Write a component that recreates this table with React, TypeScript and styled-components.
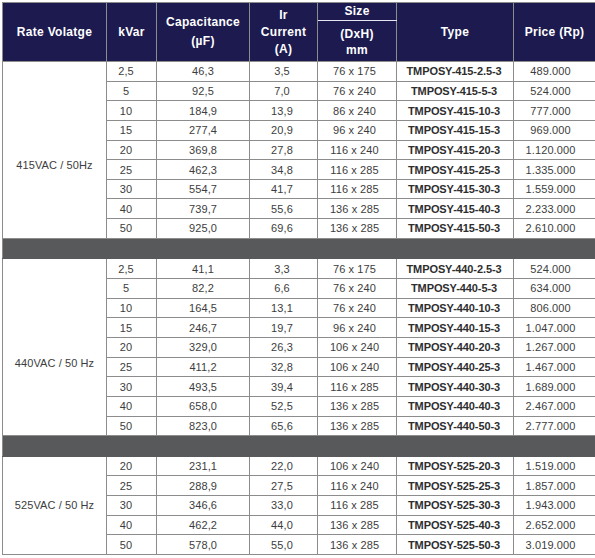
import React from "react";
import styled, { createGlobalStyle } from "styled-components";

const Global = createGlobalStyle`
  html, body { margin: 0; padding: 0; background: #ffffff; }
  body { font-family: "Liberation Sans", Arial, sans-serif; }
`;

const Page = styled.div`
  padding: 2px 0 0 2px;
`;

const Table = styled.table`
  border-collapse: collapse;
  table-layout: fixed;
  width: 593px;
  border: 1px solid #8c8c8c;
`;

const HeadCell = styled.th<{ $lh?: number }>`
  background: #1d1a4f;
  color: #ffffff;
  font-weight: bold;
  font-size: 12px;
  letter-spacing: 0.3px;
  line-height: ${(p) => p.$lh ?? 17}px;
  text-align: center;
  vertical-align: middle;
  border: 1px solid #8c8c8c;
  padding: 0 2px;
`;

const SizeTop = styled(HeadCell)`
  height: 17px;
  border-bottom: 1px solid #e6e6f0;
`;

const SizeBottom = styled(HeadCell)`
  height: 38px;
  border-top: 1px solid #e6e6f0;
  line-height: 16px;
  padding-top: 2px;
`;

const Row = styled.tr`
  height: 19.65px;
`;

const Cell = styled.td<{ $bold?: boolean; $pr?: number }>`
  font-size: 11px;
  color: ${(p) => (p.$bold ? "#2e2e2e" : "#3d3d3d")};
  font-weight: ${(p) => (p.$bold ? "bold" : "normal")};
  letter-spacing: ${(p) => (p.$bold ? "-0.1px" : "0.1px")};
  text-align: center;
  vertical-align: middle;
  border: 1px solid #8c8c8c;
  padding: 0 ${(p) => p.$pr ?? 0}px 0 0;
  white-space: nowrap;
`;

const RateCell = styled.td<{ $shift: number }>`
  font-size: 11px;
  color: #3d3d3d;
  letter-spacing: 0.1px;
  text-align: center;
  vertical-align: middle;
  border: 1px solid #8c8c8c;
  padding: ${(p) => p.$shift}px 0 0 0;
`;

const SepCell = styled.td`
  background: #58595b;
  border: 1px solid #58595b;
  border-left: 1px solid #8c8c8c;
  border-right: 1px solid #8c8c8c;
  height: 19.65px;
  padding: 0;
`;

type R = [string, string, string, string, string, string];

const sections: { rate: string; shift: number; rows: R[] }[] = [
  {
    rate: "415VAC / 50Hz",
    shift: 30,
    rows: [
      ["2,5", "46,3", "3,5", "76 x 175", "TMPOSY-415-2.5-3", "489.000"],
      ["5", "92,5", "7,0", "76 x 240", "TMPOSY-415-5-3", "524.000"],
      ["10", "184,9", "13,9", "86 x 240", "TMPOSY-415-10-3", "777.000"],
      ["15", "277,4", "20,9", "96 x 240", "TMPOSY-415-15-3", "969.000"],
      ["20", "369,8", "27,8", "116 x 240", "TMPOSY-415-20-3", "1.120.000"],
      ["25", "462,3", "34,8", "116 x 285", "TMPOSY-415-25-3", "1.335.000"],
      ["30", "554,7", "41,7", "116 x 285", "TMPOSY-415-30-3", "1.559.000"],
      ["40", "739,7", "55,6", "136 x 285", "TMPOSY-415-40-3", "2.233.000"],
      ["50", "925,0", "69,6", "136 x 285", "TMPOSY-415-50-3", "2.610.000"],
    ],
  },
  {
    rate: "440VAC / 50 Hz",
    shift: 32,
    rows: [
      ["2,5", "41,1", "3,3", "76 x 175", "TMPOSY-440-2.5-3", "524.000"],
      ["5", "82,2", "6,6", "76 x 240", "TMPOSY-440-5-3", "634.000"],
      ["10", "164,5", "13,1", "76 x 240", "TMPOSY-440-10-3", "806.000"],
      ["15", "246,7", "19,7", "96 x 240", "TMPOSY-440-15-3", "1.047.000"],
      ["20", "329,0", "26,3", "106 x 240", "TMPOSY-440-20-3", "1.267.000"],
      ["25", "411,2", "32,8", "106 x 240", "TMPOSY-440-25-3", "1.467.000"],
      ["30", "493,5", "39,4", "116 x 285", "TMPOSY-440-30-3", "1.689.000"],
      ["40", "658,0", "52,5", "136 x 285", "TMPOSY-440-40-3", "2.467.000"],
      ["50", "823,0", "65,6", "136 x 285", "TMPOSY-440-50-3", "2.777.000"],
    ],
  },
  {
    rate: "525VAC / 50 Hz",
    shift: 0,
    rows: [
      ["20", "231,1", "22,0", "106 x 240", "TMPOSY-525-20-3", "1.519.000"],
      ["25", "288,9", "27,5", "116 x 240", "TMPOSY-525-25-3", "1.857.000"],
      ["30", "346,6", "33,0", "116 x 285", "TMPOSY-525-30-3", "1.943.000"],
      ["40", "462,2", "44,0", "136 x 285", "TMPOSY-525-40-3", "2.652.000"],
      ["50", "578,0", "55,0", "136 x 285", "TMPOSY-525-50-3", "3.019.000"],
    ],
  },
];

const widths = [104, 50, 93, 68, 79, 117, 82];

export default function App() {
  return (
    <Page>
      <Global />
      <Table>
        <colgroup>
          {widths.map((w, i) => (
            <col key={i} style={{ width: w }} />
          ))}
        </colgroup>
        <thead>
          <tr>
            <HeadCell rowSpan={2}>Rate Volatge</HeadCell>
            <HeadCell rowSpan={2}>kVar</HeadCell>
            <HeadCell rowSpan={2} $lh={19}>
              Capacitance
              <br />
              (µF)
            </HeadCell>
            <HeadCell rowSpan={2} $lh={17}>
              Ir
              <br />
              Current
              <br />
              (A)
            </HeadCell>
            <SizeTop>Size</SizeTop>
            <HeadCell rowSpan={2}>Type</HeadCell>
            <HeadCell rowSpan={2}>Price (Rp)</HeadCell>
          </tr>
          <tr>
            <SizeBottom>
              (DxH)
              <br />
              mm
            </SizeBottom>
          </tr>
        </thead>
        <tbody>
          {sections.map((s, si) => (
            <React.Fragment key={si}>
              {si > 0 && (
                <tr>
                  <SepCell colSpan={7} />
                </tr>
              )}
              {s.rows.map((r, ri) => (
                <Row key={ri}>
                  {ri === 0 && (
                    <RateCell rowSpan={s.rows.length} $shift={s.shift}>
                      {s.rate}
                    </RateCell>
                  )}
                  <Cell $pr={11}>{r[0]}</Cell>
                  <Cell>{r[1]}</Cell>
                  <Cell $pr={3}>{r[2]}</Cell>
                  <Cell $pr={5}>{r[3]}</Cell>
                  <Cell $bold $pr={2}>{r[4]}</Cell>
                  <Cell $pr={8}>{r[5]}</Cell>
                </Row>
              ))}
            </React.Fragment>
          ))}
        </tbody>
      </Table>
    </Page>
  );
}
